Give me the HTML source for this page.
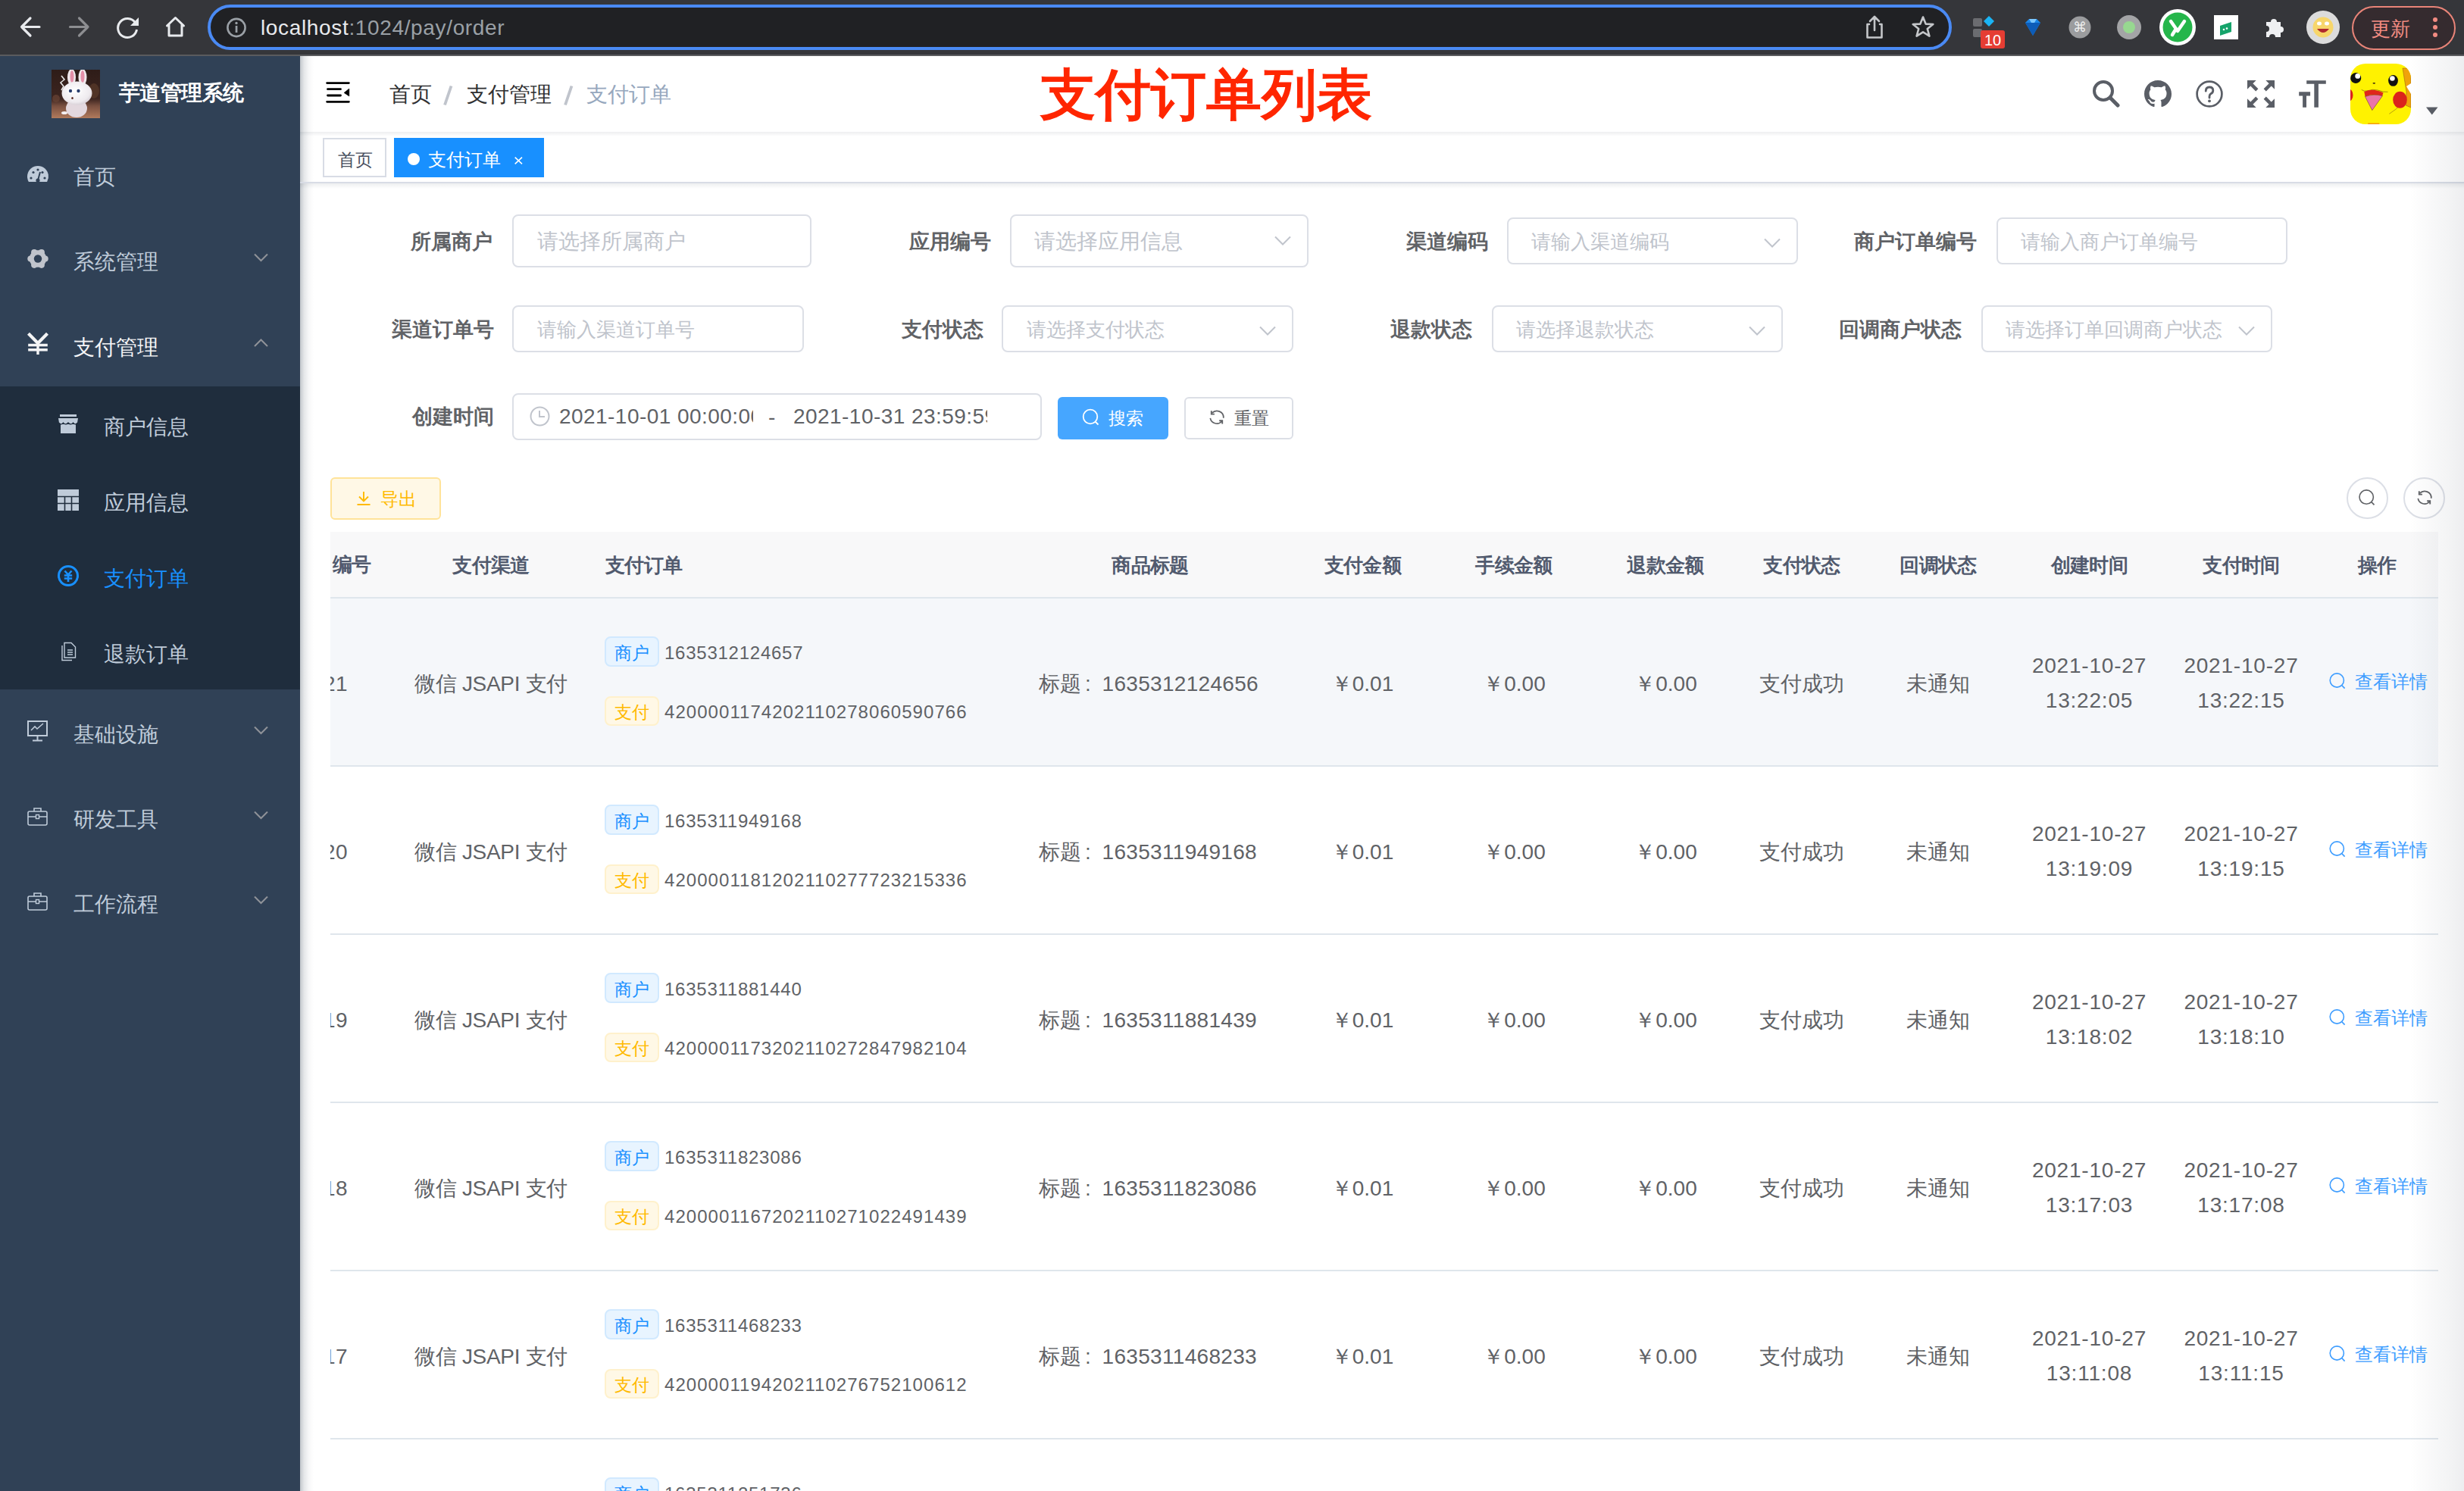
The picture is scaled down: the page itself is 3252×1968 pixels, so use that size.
<!DOCTYPE html>
<html><head><meta charset="utf-8"><title>支付订单</title>
<style>
html,body{margin:0;padding:0;}
body{width:3252px;height:1968px;overflow:hidden;position:relative;background:#fff;font-family:'Liberation Sans', sans-serif;}
.t{position:absolute;white-space:nowrap;height:auto;}
.b{position:absolute;box-sizing:border-box;}
svg.b{overflow:visible;}
</style></head><body>

<div class="b" style="left:0px;top:0px;width:3252px;height:72px;background:#35363a;"></div>
<div class="b" style="left:0px;top:72px;width:3252px;height:2px;background:#5a5b5e;"></div>
<svg class="b" style="left:20px;top:16px;" width="40" height="40" viewBox="0 0 40 40"><path d="M8.5 19.5 H32 M20 8 L8.5 19.5 L20 31" fill="none" stroke="#e8eaed" stroke-width="3.2" stroke-linecap="round" stroke-linejoin="round"/></svg>
<svg class="b" style="left:84px;top:16px;" width="40" height="40" viewBox="0 0 40 40"><path d="M32 19.5 H8.5 M20.5 8 L32 19.5 L20.5 31" fill="none" stroke="#8d8e91" stroke-width="3.2" stroke-linecap="round" stroke-linejoin="round"/></svg>
<svg class="b" style="left:148px;top:16px;" width="40" height="40" viewBox="0 0 40 40"><path d="M30.5 14 A12.5 12.5 0 1 0 32.5 23" fill="none" stroke="#e8eaed" stroke-width="3"/><path d="M35 7 V18 H24 Z" fill="#e8eaed"/></svg>
<svg class="b" style="left:212px;top:16px;" width="40" height="40" viewBox="0 0 40 40"><path d="M8.5 18 L19.5 7.5 L30.5 18 M11 16 V31 H28 V16" fill="none" stroke="#e8eaed" stroke-width="3" stroke-linejoin="round" stroke-linecap="round"/></svg>
<div class="b" style="left:274px;top:6px;width:2302px;height:60px;background:#202124;border:4px solid #4a8af4;border-radius:30px;"></div>
<svg class="b" style="left:296px;top:20px;" width="32" height="32" viewBox="0 0 32 32"><circle cx="16" cy="16.5" r="11.6" fill="none" stroke="#9aa0a6" stroke-width="2.6"/><rect x="14.7" y="14" width="2.7" height="9" fill="#9aa0a6"/><circle cx="16" cy="10.5" r="1.7" fill="#9aa0a6"/></svg>
<div class="t " style="left:344px;top:16.5px;font-size:28px;line-height:40px;color:#606266;font-weight:normal;letter-spacing:0.65px;"><span style="color:#e8eaed">localhost</span><span style="color:#9aa0a6">:1024/pay/order</span></div>
<svg class="b" style="left:2456px;top:18px;" width="36" height="36" viewBox="0 0 36 36"><path d="M11 14 H8.5 V31.5 H27.5 V14 H25 M18 4.5 V22 M12 10 L18 4 L24 10" fill="none" stroke="#c4c6c9" stroke-width="2.6" stroke-linejoin="round" stroke-linecap="round"/></svg>
<svg class="b" style="left:2520px;top:18px;" width="36" height="36" viewBox="0 0 36 36"><path d="M18 4.5 L21.6 13.6 L31.3 14 L23.8 20.1 L26.4 29.6 L18 24.3 L9.6 29.6 L12.2 20.1 L4.7 14 L14.4 13.6 Z" fill="none" stroke="#c4c6c9" stroke-width="2.6" stroke-linejoin="round"/></svg>
<div class="b" style="left:2604px;top:24px;width:12px;height:11px;background:#6b6c70;border-radius:2px;"></div>
<div class="b" style="left:2604px;top:38px;width:12px;height:11px;background:#6b6c70;border-radius:2px;"></div>
<svg class="b" style="left:2617px;top:20px;" width="16" height="16" viewBox="0 0 16 16"><path d="M8 1 L15 8 L8 15 L1 8 Z" fill="#1ab4f4"/></svg>
<div class="b" style="left:2614px;top:40px;width:32px;height:24px;background:#e53d33;border-radius:3px;"></div>
<div class="t " style="left:2619px;top:40.5px;font-size:20px;line-height:24px;color:#fff;font-weight:normal;">10</div>
<svg class="b" style="left:2669px;top:22px;" width="28" height="28" viewBox="0 0 28 28"><path d="M4 8 L9 3 H19 L24 8 L14 25 Z" fill="#1b86e8"/><path d="M4 8 H24 L14 25 Z" fill="#0d5cb8"/><path d="M9 3 H19 L16 8 H12 Z" fill="#7cc8ff"/></svg>
<svg class="b" style="left:2730px;top:21px;" width="30" height="30" viewBox="0 0 30 30"><circle cx="15" cy="15" r="14.5" fill="#9b9c9e"/><text x="15" y="21" font-size="18" text-anchor="middle" fill="#eee" font-family="Liberation Sans">⌘</text></svg>
<svg class="b" style="left:2794px;top:20px;" width="32" height="32" viewBox="0 0 32 32"><circle cx="16" cy="16" r="16" fill="#a3a4a6"/><circle cx="16" cy="16" r="8" fill="#97d890"/></svg>
<svg class="b" style="left:2850px;top:12px;" width="48" height="48" viewBox="0 0 48 48"><circle cx="24" cy="24" r="24" fill="#fff"/><circle cx="24" cy="24" r="19.5" fill="#25b64b"/><path d="M15 16 L22 26 L17 34 M33 16 L24 29" fill="none" stroke="#fff" stroke-width="4.5" stroke-linecap="round"/></svg>
<svg class="b" style="left:2922px;top:20px;" width="32" height="32" viewBox="0 0 32 32"><rect width="32" height="32" fill="#fff"/><path d="M8 14 L23 9 V22 L8 27 Z" fill="#16a46b"/><circle cx="13" cy="19" r="1.3" fill="#fff"/><circle cx="17" cy="17.6" r="1.3" fill="#fff"/></svg>
<svg class="b" style="left:2986px;top:19px;" width="34" height="34" viewBox="0 0 34 34"><path d="M5 10 H11 A4 4 0 0 1 19 10 H24 V16 A4 4 0 0 1 24 24 V30 H17 A4 4 0 0 0 9 30 H5 V23 A4 4 0 0 0 5 15 Z" fill="#eff0f2"/></svg>
<svg class="b" style="left:3044px;top:14px;" width="44" height="44" viewBox="0 0 44 44"><circle cx="22" cy="22" r="22" fill="#dcdcdc"/><circle cx="22" cy="22" r="13.5" fill="#f7d66b"/><ellipse cx="17" cy="17" rx="3" ry="2.5" fill="#fff"/><ellipse cx="27" cy="17" rx="3" ry="2.5" fill="#fff"/><path d="M14 24 Q22 34 30 24 Z" fill="#b0282d"/></svg>
<div class="b" style="left:3104px;top:8px;width:137px;height:58px;background:#352b2f;border:2px solid #e98478;border-radius:29px;"></div>
<div class="t " style="left:3129px;top:19.5px;font-size:26px;line-height:36px;color:#f28b82;font-weight:normal;">更新</div>
<div class="b" style="left:3211px;top:23px;width:6px;height:6px;background:#f28b82;border-radius:50%;"></div>
<div class="b" style="left:3211px;top:33px;width:6px;height:6px;background:#f28b82;border-radius:50%;"></div>
<div class="b" style="left:3211px;top:43px;width:6px;height:6px;background:#f28b82;border-radius:50%;"></div>
<div class="b" style="left:0px;top:74px;width:396px;height:1894px;background:#304156;"></div>
<div class="b" style="left:0px;top:510px;width:396px;height:400px;background:#1f2d3d;"></div>
<svg class="b" style="left:68px;top:92px;overflow:hidden;" width="64" height="64" viewBox="0 0 64 64"><defs><radialGradient id="bh" cx="0.45" cy="0.4" r="0.6"><stop offset="0" stop-color="#ffffff"/><stop offset="0.8" stop-color="#eeeaee"/><stop offset="1" stop-color="#d9d2d8"/></radialGradient>
<linearGradient id="bg1" x1="0" y1="0" x2="0" y2="1"><stop offset="0" stop-color="#2e1c18"/><stop offset="0.6" stop-color="#3d2520"/><stop offset="0.75" stop-color="#7a5040"/><stop offset="1" stop-color="#b07a5c"/></linearGradient></defs>
<rect width="64" height="64" fill="url(#bg1)"/>
<ellipse cx="56" cy="28" rx="7" ry="10" fill="#5a3a2a" opacity="0.7"/><ellipse cx="6" cy="38" rx="5" ry="5" fill="#6a4536" opacity="0.7"/>
<path d="M13 8 L17 13 L12 17 L16 22 L13 27" fill="none" stroke="#e8e8e8" stroke-width="1.6"/>
<ellipse cx="26.5" cy="10" rx="5.5" ry="11" fill="#efe8ec"/><ellipse cx="27" cy="9" rx="2.5" ry="8" fill="#e48fa8"/>
<ellipse cx="41" cy="10" rx="5.5" ry="11" fill="#efe8ec"/><ellipse cx="41" cy="9" rx="2.5" ry="8" fill="#e48fa8"/>
<ellipse cx="33" cy="51" rx="14" ry="12" fill="#e3d8de"/>
<ellipse cx="33.5" cy="31" rx="20" ry="15.5" fill="url(#bh)"/>
<ellipse cx="25" cy="28" rx="3.6" ry="3.2" fill="#fff"/><ellipse cx="35.5" cy="28" rx="3.6" ry="3.2" fill="#fff"/>
<circle cx="25" cy="28" r="2.2" fill="#2a3e6e"/><circle cx="35.5" cy="28" r="2.2" fill="#2a3e6e"/>
<ellipse cx="27.5" cy="37.5" rx="1.3" ry="1.6" fill="#5a2a22"/>
<ellipse cx="17" cy="57" rx="4" ry="2" fill="#f4f0f2"/></svg>
<div class="t " style="left:157px;top:102.5px;font-size:28px;line-height:40px;color:#ffffff;font-weight:bold;letter-spacing:-0.6px;">芋道管理系统</div>
<svg class="b" style="left:36px;top:218px;" width="28" height="24" viewBox="0 0 28 24"><path d="M1.9 22 A14 14 0 1 1 26.1 22 Z" fill="#bfcbd9"/><circle cx="5" cy="17" r="1.6" fill="#304156"/><circle cx="8" cy="9.5" r="1.6" fill="#304156"/><circle cx="14" cy="6" r="1.6" fill="#304156"/><circle cx="20" cy="9.5" r="1.6" fill="#304156"/><circle cx="23" cy="17" r="1.6" fill="#304156"/><path d="M14 20 L17 9" stroke="#304156" stroke-width="2"/><circle cx="14" cy="20" r="2.6" fill="#304156"/></svg>
<div class="t " style="left:97px;top:213.5px;font-size:27.5px;line-height:40px;color:#bfcbd9;font-weight:normal;">首页</div>
<svg class="b" style="left:36px;top:328px;" width="28" height="28" viewBox="0 0 28 28"><circle cx="14" cy="13.5" r="11.2" fill="#c0c4cc"/><circle cx="23.60" cy="13.50" r="4.1" fill="#c0c4cc"/><circle cx="18.80" cy="21.81" r="4.1" fill="#c0c4cc"/><circle cx="9.20" cy="21.81" r="4.1" fill="#c0c4cc"/><circle cx="4.40" cy="13.50" r="4.1" fill="#c0c4cc"/><circle cx="9.20" cy="5.19" r="4.1" fill="#c0c4cc"/><circle cx="18.80" cy="5.19" r="4.1" fill="#c0c4cc"/><circle cx="14" cy="13.5" r="5.2" fill="#304156"/></svg>
<div class="t " style="left:97px;top:326.0px;font-size:27.5px;line-height:40px;color:#bfcbd9;font-weight:normal;">系统管理</div>
<svg class="b" style="left:335px;top:334px;" width="19" height="12" viewBox="0 0 19 12"><path d="M1 1.5 L9.5 10 L18 1.5" fill="none" stroke="#909399" stroke-width="2"/></svg>
<svg class="b" style="left:36px;top:439px;" width="28" height="30" viewBox="0 0 28 30"><path d="M1.5 1.2 L14 14 L26.5 1.2" fill="none" stroke="#f4f4f5" stroke-width="4.2"/><path d="M14 13 V29 M1.2 16.5 H26.8 M1.2 22.8 H26.8" fill="none" stroke="#f4f4f5" stroke-width="3.4"/></svg>
<div class="t " style="left:97px;top:438.5px;font-size:27.5px;line-height:40px;color:#f4f4f5;font-weight:normal;">支付管理</div>
<svg class="b" style="left:335px;top:447px;" width="19" height="12" viewBox="0 0 19 12"><path d="M1 10 L9.5 1.5 L18 10" fill="none" stroke="#909399" stroke-width="2"/></svg>
<svg class="b" style="left:76px;top:547px;" width="28" height="26" viewBox="0 0 28 26"><rect x="3" y="0" width="22" height="3" fill="#bfcbd9"/><path d="M1 5 H27 L26 11 Q23.5 14 21 11 Q18 14 14 11 Q10 14 7 11 Q4.5 14 2 11 Z" fill="#bfcbd9"/><rect x="4" y="13" width="20" height="12" fill="#bfcbd9"/><path d="M2 11 Q4.5 15 7.5 11 Q10.5 15 14 11 Q17.5 15 20.5 11 Q23.5 15 26 11" fill="none" stroke="#1f2d3d" stroke-width="1.2"/></svg>
<div class="t " style="left:137px;top:544.0px;font-size:27.5px;line-height:40px;color:#bfcbd9;font-weight:normal;">商户信息</div>
<svg class="b" style="left:76px;top:646px;" width="28" height="28" viewBox="0 0 28 28"><rect width="28" height="28" fill="#bfcbd9"/><path d="M0 9.5 H28 M0 18.5 H28 M9.5 9 V28 M18.5 9 V28" stroke="#1f2d3d" stroke-width="1.6"/></svg>
<div class="t " style="left:137px;top:644.0px;font-size:27.5px;line-height:40px;color:#bfcbd9;font-weight:normal;">应用信息</div>
<svg class="b" style="left:76px;top:746px;" width="28" height="28" viewBox="0 0 28 28"><circle cx="14" cy="14" r="12.5" fill="none" stroke="#1890ff" stroke-width="3"/><path d="M9.5 7.5 L14 12.5 L18.5 7.5 M8.8 13.5 H19.2 M8.8 17.5 H19.2 M14 12.5 V22" fill="none" stroke="#1890ff" stroke-width="2.6"/></svg>
<div class="t " style="left:137px;top:744.0px;font-size:27.5px;line-height:40px;color:#1890ff;font-weight:normal;">支付订单</div>
<svg class="b" style="left:79px;top:847px;" width="22" height="26" viewBox="0 0 22 26"><path d="M6 1.5 H15 L20.5 7 V21 H6 Z" fill="none" stroke="#bfcbd9" stroke-width="1.4"/><path d="M3 5 V24.5 H16" fill="none" stroke="#bfcbd9" stroke-width="1.4"/><path d="M10 11 H17 M10 14 H17 M10 17 H17" stroke="#bfcbd9" stroke-width="1.4"/></svg>
<div class="t " style="left:137px;top:844.0px;font-size:27.5px;line-height:40px;color:#bfcbd9;font-weight:normal;">退款订单</div>
<svg class="b" style="left:36px;top:951px;" width="27" height="28" viewBox="0 0 27 28"><rect x="1" y="1" width="25" height="19" fill="none" stroke="#bfcbd9" stroke-width="2"/><path d="M5 13 L10 8 L13 11 L21 4" fill="none" stroke="#bfcbd9" stroke-width="1.6"/><path d="M13.5 20 V26 M7 26.5 H20" stroke="#bfcbd9" stroke-width="2"/></svg>
<div class="t " style="left:97px;top:950.0px;font-size:27.5px;line-height:40px;color:#bfcbd9;font-weight:normal;">基础设施</div>
<svg class="b" style="left:335px;top:958px;" width="19" height="12" viewBox="0 0 19 12"><path d="M1 1.5 L9.5 10 L18 1.5" fill="none" stroke="#909399" stroke-width="2"/></svg>
<svg class="b" style="left:36px;top:1065px;" width="27" height="25" viewBox="0 0 27 25"><rect x="1" y="6" width="25" height="18" rx="2" fill="none" stroke="#bfcbd9" stroke-width="1.6"/><path d="M9 6 V2 H18 V6 M1 13 H26" fill="none" stroke="#bfcbd9" stroke-width="1.6"/><rect x="11.5" y="10.5" width="4" height="5" fill="#304156" stroke="#bfcbd9" stroke-width="1.4"/></svg>
<div class="t " style="left:97px;top:1062.0px;font-size:27.5px;line-height:40px;color:#bfcbd9;font-weight:normal;">研发工具</div>
<svg class="b" style="left:335px;top:1070px;" width="19" height="12" viewBox="0 0 19 12"><path d="M1 1.5 L9.5 10 L18 1.5" fill="none" stroke="#909399" stroke-width="2"/></svg>
<svg class="b" style="left:36px;top:1177px;" width="27" height="25" viewBox="0 0 27 25"><rect x="1" y="6" width="25" height="18" rx="2" fill="none" stroke="#bfcbd9" stroke-width="1.6"/><path d="M9 6 V2 H18 V6 M1 13 H26" fill="none" stroke="#bfcbd9" stroke-width="1.6"/><rect x="11.5" y="10.5" width="4" height="5" fill="#304156" stroke="#bfcbd9" stroke-width="1.4"/></svg>
<div class="t " style="left:97px;top:1174.0px;font-size:27.5px;line-height:40px;color:#bfcbd9;font-weight:normal;">工作流程</div>
<svg class="b" style="left:335px;top:1182px;" width="19" height="12" viewBox="0 0 19 12"><path d="M1 1.5 L9.5 10 L18 1.5" fill="none" stroke="#909399" stroke-width="2"/></svg>
<div class="b" style="left:396px;top:74px;width:18px;height:1894px;background:linear-gradient(to right, rgba(0,21,41,0.24), rgba(0,21,41,0.10) 30%, rgba(0,21,41,0.03) 65%, rgba(0,21,41,0));"></div>
<div class="b" style="left:396px;top:174px;width:2856px;height:6px;background:linear-gradient(to bottom, rgba(0,21,41,0.07), rgba(0,21,41,0));"></div>
<svg class="b" style="left:430px;top:107px;" width="34" height="30" viewBox="0 0 34 30"><path d="M1.6 2.6 H30.4 M2.5 10.7 H19.5 M2.5 19 H19.5 M1.6 27.3 H30.4" stroke="#000" stroke-width="2.8" stroke-linecap="round"/><path d="M24.1 15.4 L30.8 10.1 V19.9 Z" fill="#000" stroke="#000" stroke-width="0.6" stroke-linejoin="round"/></svg>
<div class="t " style="left:514px;top:104.5px;font-size:28px;line-height:40px;color:#303133;font-weight:normal;">首页</div>
<svg class="b" style="left:584px;top:112px;" width="14" height="28" viewBox="0 0 14 28"><path d="M11.5 1.5 L3 26.5" stroke="#c0c4cc" stroke-width="3.8" stroke-linecap="butt"/></svg>
<div class="t " style="left:616px;top:104.5px;font-size:28px;line-height:40px;color:#303133;font-weight:normal;">支付管理</div>
<svg class="b" style="left:743px;top:112px;" width="14" height="28" viewBox="0 0 14 28"><path d="M11.5 1.5 L3 26.5" stroke="#c0c4cc" stroke-width="3.8" stroke-linecap="butt"/></svg>
<div class="t " style="left:774px;top:104.5px;font-size:28px;line-height:40px;color:#97a8be;font-weight:normal;">支付订单</div>
<div class="t " style="left:1372.5px;top:75.0px;font-size:72.5px;line-height:100px;color:#ff2600;font-weight:bold;letter-spacing:0px;">支付订单列表</div>
<svg class="b" style="left:2760px;top:104px;" width="40" height="40" viewBox="0 0 40 40"><circle cx="16" cy="16" r="12" fill="none" stroke="#5a5e66" stroke-width="4"/><path d="M25 25 L35 35" stroke="#5a5e66" stroke-width="5" stroke-linecap="round"/></svg>
<svg class="b" style="left:2830px;top:106px;" width="36" height="36" viewBox="0 0 36 36"><path fill="#5a5e66" transform="scale(2.25)" d="M8 0C3.58 0 0 3.58 0 8c0 3.54 2.29 6.53 5.47 7.59.4.07.55-.17.55-.38 0-.19-.01-.82-.01-1.49-2.01.37-2.53-.49-2.69-.94-.09-.23-.48-.94-.82-1.13-.28-.15-.68-.52-.01-.53.63-.01 1.08.58 1.23.82.72 1.21 1.87.87 2.33.66.07-.52.28-.87.51-1.07-1.78-.2-3.64-.89-3.64-3.95 0-.87.31-1.59.82-2.150-.08-.2-.36-1.02.08-2.12 0 0 .67-.21 2.2.82.64-.18 1.32-.27 2-.27.68 0 1.36.09 2 .27 1.53-1.04 2.2-.82 2.2-.82.44 1.1.16 1.92.08 2.12.51.56.82 1.27.82 2.15 0 3.07-1.87 3.75-3.65 3.95.29.25.54.73.54 1.48 0 1.07-.01 1.93-.01 2.2 0 .21.15.46.55.38A8.013 8.013 0 0016 8c0-4.42-3.58-8-8-8z"/></svg>
<svg class="b" style="left:2898px;top:106px;" width="36" height="36" viewBox="0 0 36 36"><circle cx="18" cy="18" r="16.4" fill="none" stroke="#5a5e66" stroke-width="2.7"/><path d="M13.2 14.2 Q13.2 9 18 9 Q22.8 9 22.8 13.5 Q22.8 16.5 19.5 18 Q18 19 18 21.5 V23" fill="none" stroke="#5a5e66" stroke-width="2.8" stroke-linecap="round"/><circle cx="18" cy="27.3" r="1.9" fill="#5a5e66"/></svg>
<svg class="b" style="left:2966px;top:106px;" width="36" height="36" viewBox="0 0 36 36"><g fill="#5a5e66"><path d="M0 0 H11.7 L7.4 4.3 L14.4 11.2 L11.2 14.4 L4.3 7.4 L0 11.7 Z"/><path transform="translate(36 0) scale(-1 1)" d="M0 0 H11.7 L7.4 4.3 L14.4 11.2 L11.2 14.4 L4.3 7.4 L0 11.7 Z"/><path transform="translate(0 36) scale(1 -1)" d="M0 0 H11.7 L7.4 4.3 L14.4 11.2 L11.2 14.4 L4.3 7.4 L0 11.7 Z"/><path transform="translate(36 36) scale(-1 -1)" d="M0 0 H11.7 L7.4 4.3 L14.4 11.2 L11.2 14.4 L4.3 7.4 L0 11.7 Z"/></g></svg>
<svg class="b" style="left:3034px;top:106px;" width="36" height="36" viewBox="0 0 36 36"><path d="M10.2 0.2 H35.8 V4.7 H25.9 V35.8 H20.3 V4.7 H10.2 Z" fill="#5a5e66"/><path d="M0.2 15.2 H15.1 V20.4 H10 V35.8 H5.1 V20.4 H0.2 Z" fill="#5a5e66"/></svg>
<svg class="b" style="left:3102px;top:84px;" width="80" height="80" viewBox="0 0 80 80"><defs><clipPath id="av"><rect width="80" height="80" rx="20"/></clipPath></defs>
<g clip-path="url(#av)"><rect width="80" height="80" fill="#fff200"/>
<path d="M69 6 L80 6 L80 58 L73 55 L74 37 Z" fill="#f0a30a" stroke="#8a5a10" stroke-width="0.5"/><path d="M74 30 L80 26 L80 40 Z" fill="#fff"/>
<ellipse cx="7.2" cy="19" rx="7" ry="7" fill="#111" transform="rotate(-20 7.2 19)"/><circle cx="9.7" cy="16.4" r="3.4" fill="#fff"/>
<ellipse cx="56.5" cy="22.4" rx="6.4" ry="7.4" fill="#111"/><circle cx="55.4" cy="19.5" r="3.3" fill="#fff"/>
<ellipse cx="31.3" cy="25.8" rx="1.8" ry="0.9" fill="#3a2a10"/>
<path d="M51.3 66.3 Q60 61 67.7 53.3" fill="none" stroke="#8a6a10" stroke-width="0.6"/><ellipse cx="65.5" cy="47.7" rx="9.3" ry="11" fill="#db241c"/><ellipse cx="-2" cy="41.5" rx="5.5" ry="8" fill="#db241c"/>
<path d="M14.7 34.4 Q18 37 22 36 Q30 33 36 35 Q44 38 49.5 37.3" fill="none" stroke="#6a4a10" stroke-width="0.6"/>
<path d="M18.3 37 Q30 32 43.5 38.5 L42 43 Q31 39 19.5 43.5 Z" fill="#e0261b"/>
<path d="M19.5 43.5 Q31 39.5 42.4 42.5 L28.8 61.6 Z" fill="#ea74a8" stroke="#5a2a20" stroke-width="0.5"/>
<rect x="23.2" y="78.5" width="15" height="2.5" fill="#f59a0b"/></g></svg>
<svg class="b" style="left:3202px;top:141px;" width="16" height="11" viewBox="0 0 16 11"><path d="M0 0.5 H15.5 L7.75 10.5 Z" fill="#5a5e66"/></svg>
<div class="b" style="left:396px;top:240px;width:2856px;height:2px;background:#d8dce5;"></div><div class="b" style="left:396px;top:242px;width:2856px;height:7px;background:linear-gradient(to bottom, rgba(0,21,41,0.07), rgba(0,21,41,0));"></div>
<div class="b" style="left:426px;top:182px;width:84px;height:52px;border:2px solid #d8dce5;background:#fff;"></div>
<div class="t " style="left:446px;top:192.5px;font-size:23px;line-height:36px;color:#495060;font-weight:normal;">首页</div>
<div class="b" style="left:520px;top:182px;width:198px;height:52px;background:#1890ff;"></div>
<div class="b" style="left:538px;top:202px;width:16px;height:16px;background:#fff;border-radius:50%;"></div>
<div class="t " style="left:565px;top:192.5px;font-size:23.5px;line-height:36px;color:#fff;font-weight:normal;">支付订单</div>
<svg class="b" style="left:679px;top:207px;" width="11" height="10" viewBox="0 0 11 10"><path d="M0.7 0.7 L10 9.3 M10 0.7 L0.7 9.3" stroke="#fff" stroke-width="1.6"/></svg>
<div class="t" style="left:249px;width:401px;text-align:right;top:298.5px;font-size:27px;line-height:40px;color:#606266;font-weight:bold;">所属商户</div>
<div class="b" style="left:676px;top:283px;width:395px;height:70px;border:2px solid #dcdfe6;border-radius:8px;background:#fff;"></div>
<div class="t " style="left:709px;top:299.0px;font-size:27.5px;line-height:40px;color:#c0c4cc;font-weight:normal;">请选择所属商户</div>
<div class="t" style="left:907px;width:401px;text-align:right;top:298.5px;font-size:27px;line-height:40px;color:#606266;font-weight:bold;">应用编号</div>
<div class="b" style="left:1333px;top:283px;width:394px;height:70px;border:2px solid #dcdfe6;border-radius:8px;background:#fff;"></div>
<div class="t " style="left:1365px;top:299.0px;font-size:27.5px;line-height:40px;color:#c0c4cc;font-weight:normal;">请选择应用信息</div>
<svg class="b" style="left:1682px;top:311px;" width="22" height="13" viewBox="0 0 22 13"><path d="M1 1.5 L11 11.5 L21 1.5" fill="none" stroke="#c0c4cc" stroke-width="2"/></svg>
<div class="t" style="left:1563px;width:401px;text-align:right;top:298.5px;font-size:27px;line-height:40px;color:#606266;font-weight:bold;">渠道编码</div>
<div class="b" style="left:1989px;top:287px;width:384px;height:62px;border:2px solid #dcdfe6;border-radius:8px;background:#fff;"></div>
<div class="t " style="left:2021px;top:299.0px;font-size:26px;line-height:40px;color:#c0c4cc;font-weight:normal;">请输入渠道编码</div>
<svg class="b" style="left:2328px;top:314px;" width="22" height="13" viewBox="0 0 22 13"><path d="M1 1.5 L11 11.5 L21 1.5" fill="none" stroke="#c0c4cc" stroke-width="2"/></svg>
<div class="t" style="left:2208px;width:401px;text-align:right;top:298.5px;font-size:27px;line-height:40px;color:#606266;font-weight:bold;">商户订单编号</div>
<div class="b" style="left:2635px;top:287px;width:384px;height:62px;border:2px solid #dcdfe6;border-radius:8px;background:#fff;"></div>
<div class="t " style="left:2667px;top:299.0px;font-size:26px;line-height:40px;color:#c0c4cc;font-weight:normal;">请输入商户订单编号</div>
<div class="t" style="left:250.60000000000002px;width:401px;text-align:right;top:415.0px;font-size:27px;line-height:40px;color:#606266;font-weight:bold;">渠道订单号</div>
<div class="b" style="left:676px;top:403px;width:385px;height:62px;border:2px solid #dcdfe6;border-radius:8px;background:#fff;"></div>
<div class="t " style="left:709px;top:415.0px;font-size:26px;line-height:40px;color:#c0c4cc;font-weight:normal;">请输入渠道订单号</div>
<div class="t" style="left:897px;width:401px;text-align:right;top:415.0px;font-size:27px;line-height:40px;color:#606266;font-weight:bold;">支付状态</div>
<div class="b" style="left:1322px;top:403px;width:385px;height:62px;border:2px solid #dcdfe6;border-radius:8px;background:#fff;"></div>
<div class="t " style="left:1355px;top:415.0px;font-size:26px;line-height:40px;color:#c0c4cc;font-weight:normal;">请选择支付状态</div>
<svg class="b" style="left:1662px;top:430px;" width="22" height="13" viewBox="0 0 22 13"><path d="M1 1.5 L11 11.5 L21 1.5" fill="none" stroke="#c0c4cc" stroke-width="2"/></svg>
<div class="t" style="left:1542px;width:401px;text-align:right;top:415.0px;font-size:27px;line-height:40px;color:#606266;font-weight:bold;">退款状态</div>
<div class="b" style="left:1969px;top:403px;width:384px;height:62px;border:2px solid #dcdfe6;border-radius:8px;background:#fff;"></div>
<div class="t " style="left:2001px;top:415.0px;font-size:26px;line-height:40px;color:#c0c4cc;font-weight:normal;">请选择退款状态</div>
<svg class="b" style="left:2308px;top:430px;" width="22" height="13" viewBox="0 0 22 13"><path d="M1 1.5 L11 11.5 L21 1.5" fill="none" stroke="#c0c4cc" stroke-width="2"/></svg>
<div class="t" style="left:2188px;width:401px;text-align:right;top:415.0px;font-size:27px;line-height:40px;color:#606266;font-weight:bold;">回调商户状态</div>
<div class="b" style="left:2615px;top:403px;width:384px;height:62px;border:2px solid #dcdfe6;border-radius:8px;background:#fff;"></div>
<div class="t " style="left:2647px;top:415.0px;font-size:26px;line-height:40px;color:#c0c4cc;font-weight:normal;">请选择订单回调商户状态</div>
<svg class="b" style="left:2954px;top:430px;" width="22" height="13" viewBox="0 0 22 13"><path d="M1 1.5 L11 11.5 L21 1.5" fill="none" stroke="#c0c4cc" stroke-width="2"/></svg>
<div class="t" style="left:251px;width:401px;text-align:right;top:530.0px;font-size:27px;line-height:40px;color:#606266;font-weight:bold;">创建时间</div>
<div class="b" style="left:676px;top:519px;width:699px;height:62px;border:2px solid #dcdfe6;border-radius:8px;background:#fff;"></div>
<svg class="b" style="left:699px;top:536px;" width="27" height="27" viewBox="0 0 27 27"><circle cx="13.5" cy="13.5" r="12" fill="none" stroke="#c0c4cc" stroke-width="2"/><path d="M13 6 V14 H20" fill="none" stroke="#c0c4cc" stroke-width="2"/></svg>
<div class="b" style="left:738px;top:530px;width:256px;height:40px;overflow:hidden;"><div class="t" style="left:0;top:0;font-size:28px;line-height:40px;color:#606266;letter-spacing:0.45px;">2021-10-01 00:00:00</div></div>
<div class="t " style="left:1014px;top:530.5px;font-size:28px;line-height:40px;color:#606266;font-weight:normal;">-</div>
<div class="b" style="left:1047px;top:530px;width:256px;height:40px;overflow:hidden;"><div class="t" style="left:0;top:0;font-size:28px;line-height:40px;color:#606266;letter-spacing:0.45px;">2021-10-31 23:59:59</div></div>
<div class="b" style="left:1396px;top:524px;width:146px;height:56px;background:#46a6ff;border-radius:6px;"></div>
<svg class="b" style="left:1428px;top:539px;" width="24" height="24" viewBox="0 0 24 24"><circle cx="11" cy="11" r="9.3" fill="none" stroke="#fff" stroke-width="1.8"/><path d="M17.5 17.5 L21.5 21.5" stroke="#fff" stroke-width="1.8"/></svg>
<div class="t " style="left:1462.5px;top:533.5px;font-size:23px;line-height:36px;color:#fff;font-weight:normal;">搜索</div>
<div class="b" style="left:1563px;top:524px;width:144px;height:56px;background:#fff;border:2px solid #dcdfe6;border-radius:6px;"></div>
<svg class="b" style="left:1595px;top:541px;" width="24" height="22" viewBox="0 0 24 22"><path d="M4.6 4.2 A8.8 8.8 0 0 1 19.8 10.8 M2.3 10.8 A8.8 8.8 0 0 0 17.6 15" fill="none" stroke="#606266" stroke-width="1.7"/><path d="M3.8 1.2 V5.6 H7.9" fill="none" stroke="#606266" stroke-width="1.9"/><path d="M14.2 14.3 H18.2 V18.5" fill="none" stroke="#606266" stroke-width="1.9"/></svg>
<div class="t " style="left:1629px;top:533.5px;font-size:23px;line-height:36px;color:#606266;font-weight:normal;">重置</div>
<div class="b" style="left:436px;top:630px;width:146px;height:56px;background:#fff8e6;border:2px solid #ffe399;border-radius:6px;"></div>
<svg class="b" style="left:470px;top:648px;" width="20" height="19" viewBox="0 0 20 19"><path d="M10 1 V13 M4 7.5 L10 13.5 L16 7.5 M1.5 18 H18.5" fill="none" stroke="#ffba00" stroke-width="1.9"/></svg>
<div class="t " style="left:502px;top:640.5px;font-size:24px;line-height:36px;color:#ffba00;font-weight:normal;">导出</div>
<div class="b" style="left:3097px;top:630px;width:55px;height:55px;border:2px solid #dcdfe6;border-radius:50%;background:#fff;"></div>
<svg class="b" style="left:3112px;top:645px;" width="24" height="24" viewBox="0 0 24 24"><circle cx="11.2" cy="11.1" r="9.2" fill="none" stroke="#606266" stroke-width="1.6"/><path d="M17.8 17.7 L21.5 21.4" stroke="#606266" stroke-width="1.7"/></svg>
<div class="b" style="left:3172px;top:630px;width:55px;height:55px;border:2px solid #dcdfe6;border-radius:50%;background:#fff;"></div>
<svg class="b" style="left:3189px;top:647px;" width="24" height="22" viewBox="0 0 24 22"><path d="M4.6 4.2 A8.8 8.8 0 0 1 19.8 10.8 M2.3 10.8 A8.8 8.8 0 0 0 17.6 15" fill="none" stroke="#606266" stroke-width="1.7"/><path d="M3.8 1.2 V5.6 H7.9" fill="none" stroke="#606266" stroke-width="1.9"/><path d="M14.2 14.3 H18.2 V18.5" fill="none" stroke="#606266" stroke-width="1.9"/></svg>
<div class="b" style="left:436px;top:702px;width:2782px;height:87px;background:#f8f8f9;"></div>
<div class="b" style="left:436px;top:788px;width:2782px;height:2px;background:#dfe6ec;"></div>
<div class="b" style="left:436px;top:720px;width:80px;height:50px;overflow:hidden;"><div class="t" style="left:2.5px;top:5px;font-size:26px;line-height:40px;color:#515a6e;font-weight:bold;letter-spacing:-0.6px;">编号</div></div>
<div class="t" style="left:448.0px;width:400px;text-align:center;top:726.0px;font-size:26px;line-height:40px;color:#515a6e;font-weight:bold;letter-spacing:-0.6px;">支付渠道</div>
<div class="t " style="left:799px;top:726.0px;font-size:26px;line-height:40px;color:#515a6e;font-weight:bold;letter-spacing:-0.6px;">支付订单</div>
<div class="t" style="left:1318.0px;width:400px;text-align:center;top:726.0px;font-size:26px;line-height:40px;color:#515a6e;font-weight:bold;letter-spacing:-0.6px;">商品标题</div>
<div class="t" style="left:1598.5px;width:400px;text-align:center;top:726.0px;font-size:26px;line-height:40px;color:#515a6e;font-weight:bold;letter-spacing:-0.6px;">支付金额</div>
<div class="t" style="left:1798.0px;width:400px;text-align:center;top:726.0px;font-size:26px;line-height:40px;color:#515a6e;font-weight:bold;letter-spacing:-0.6px;">手续金额</div>
<div class="t" style="left:1998.0px;width:400px;text-align:center;top:726.0px;font-size:26px;line-height:40px;color:#515a6e;font-weight:bold;letter-spacing:-0.6px;">退款金额</div>
<div class="t" style="left:2178.0px;width:400px;text-align:center;top:726.0px;font-size:26px;line-height:40px;color:#515a6e;font-weight:bold;letter-spacing:-0.6px;">支付状态</div>
<div class="t" style="left:2358.0px;width:400px;text-align:center;top:726.0px;font-size:26px;line-height:40px;color:#515a6e;font-weight:bold;letter-spacing:-0.6px;">回调状态</div>
<div class="t" style="left:2557.5px;width:400px;text-align:center;top:726.0px;font-size:26px;line-height:40px;color:#515a6e;font-weight:bold;letter-spacing:-0.6px;">创建时间</div>
<div class="t" style="left:2758.0px;width:400px;text-align:center;top:726.0px;font-size:26px;line-height:40px;color:#515a6e;font-weight:bold;letter-spacing:-0.6px;">支付时间</div>
<div class="t" style="left:2937.5px;width:400px;text-align:center;top:726.0px;font-size:26px;line-height:40px;color:#515a6e;font-weight:bold;letter-spacing:-0.6px;">操作</div>
<div class="b" style="left:436px;top:790px;width:2782px;height:220px;background:#f5f7fa;"></div>
<div class="b" style="left:436px;top:1010px;width:2782px;height:2px;background:#dfe6ec;"></div>
<div class="b" style="left:436px;top:870px;width:60px;height:50px;overflow:hidden;"><div class="t" style="left:-9px;top:12.5px;font-size:28px;line-height:40px;color:#606266;letter-spacing:0.5px;">21</div></div>
<div class="t " style="left:547px;top:882.5px;font-size:28px;line-height:40px;color:#606266;font-weight:normal;letter-spacing:-0.3px;">微信 JSAPI 支付</div>
<div class="b" style="left:798px;top:840px;width:72px;height:40px;background:#e8f4ff;border:2px solid #d1e9ff;border-radius:8px;"></div>
<div class="t " style="left:811px;top:844.5px;font-size:22.5px;line-height:36px;color:#1890ff;font-weight:normal;">商户</div>
<div class="t " style="left:877px;top:844.0px;font-size:24px;line-height:36px;color:#606266;font-weight:normal;letter-spacing:0.75px;">1635312124657</div>
<div class="b" style="left:798px;top:919px;width:72px;height:39px;background:#fff8e6;border:2px solid #fff1cc;border-radius:8px;"></div>
<div class="t " style="left:811px;top:922.5px;font-size:22.5px;line-height:36px;color:#ffba00;font-weight:normal;">支付</div>
<div class="t " style="left:877px;top:922.0px;font-size:24px;line-height:36px;color:#606266;font-weight:normal;letter-spacing:1.05px;">4200001174202110278060590766</div>
<div class="t " style="left:1371px;top:882.5px;font-size:28px;line-height:40px;color:#606266;font-weight:normal;letter-spacing:0.3px;">标题<span style="display:inline-block;width:27px;padding-left:4.5px;box-sizing:border-box;letter-spacing:0">:</span>1635312124656</div>
<div class="t" style="left:1598.0px;width:400px;text-align:center;top:882.5px;font-size:28px;line-height:40px;color:#606266;font-weight:normal;">￥0.01</div>
<div class="t" style="left:1798.5px;width:400px;text-align:center;top:882.5px;font-size:28px;line-height:40px;color:#606266;font-weight:normal;">￥0.00</div>
<div class="t" style="left:1998.5px;width:400px;text-align:center;top:882.5px;font-size:28px;line-height:40px;color:#606266;font-weight:normal;">￥0.00</div>
<div class="t" style="left:2178.0px;width:400px;text-align:center;top:883.0px;font-size:28px;line-height:40px;color:#606266;font-weight:normal;">支付成功</div>
<div class="t" style="left:2357.5px;width:400px;text-align:center;top:883.0px;font-size:28px;line-height:40px;color:#606266;font-weight:normal;">未通知</div>
<div class="t" style="left:2557.5px;width:400px;text-align:center;top:858.5px;font-size:28px;line-height:40px;color:#606266;font-weight:normal;letter-spacing:0.8px;">2021-10-27</div>
<div class="t" style="left:2557.5px;width:400px;text-align:center;top:904.5px;font-size:28px;line-height:40px;color:#606266;font-weight:normal;letter-spacing:0.8px;">13:22:05</div>
<div class="t" style="left:2758.0px;width:400px;text-align:center;top:858.5px;font-size:28px;line-height:40px;color:#606266;font-weight:normal;letter-spacing:0.8px;">2021-10-27</div>
<div class="t" style="left:2758.0px;width:400px;text-align:center;top:904.5px;font-size:28px;line-height:40px;color:#606266;font-weight:normal;letter-spacing:0.8px;">13:22:15</div>
<svg class="b" style="left:3073px;top:887px;" width="24" height="24" viewBox="0 0 24 24"><circle cx="11.3" cy="11" r="9.1" fill="none" stroke="#409eff" stroke-width="1.6"/><path d="M17.8 17.6 L21.6 21.6" stroke="#409eff" stroke-width="1.6"/></svg>
<div class="t " style="left:3107.5px;top:881.5px;font-size:23.5px;line-height:36px;color:#409eff;font-weight:normal;">查看详情</div>
<div class="b" style="left:436px;top:1232px;width:2782px;height:2px;background:#dfe6ec;"></div>
<div class="b" style="left:436px;top:1092px;width:60px;height:50px;overflow:hidden;"><div class="t" style="left:-9px;top:12.5px;font-size:28px;line-height:40px;color:#606266;letter-spacing:0.5px;">20</div></div>
<div class="t " style="left:547px;top:1104.5px;font-size:28px;line-height:40px;color:#606266;font-weight:normal;letter-spacing:-0.3px;">微信 JSAPI 支付</div>
<div class="b" style="left:798px;top:1062px;width:72px;height:40px;background:#e8f4ff;border:2px solid #d1e9ff;border-radius:8px;"></div>
<div class="t " style="left:811px;top:1066.5px;font-size:22.5px;line-height:36px;color:#1890ff;font-weight:normal;">商户</div>
<div class="t " style="left:877px;top:1066.0px;font-size:24px;line-height:36px;color:#606266;font-weight:normal;letter-spacing:0.75px;">1635311949168</div>
<div class="b" style="left:798px;top:1141px;width:72px;height:39px;background:#fff8e6;border:2px solid #fff1cc;border-radius:8px;"></div>
<div class="t " style="left:811px;top:1144.5px;font-size:22.5px;line-height:36px;color:#ffba00;font-weight:normal;">支付</div>
<div class="t " style="left:877px;top:1144.0px;font-size:24px;line-height:36px;color:#606266;font-weight:normal;letter-spacing:1.05px;">4200001181202110277723215336</div>
<div class="t " style="left:1371px;top:1104.5px;font-size:28px;line-height:40px;color:#606266;font-weight:normal;letter-spacing:0.3px;">标题<span style="display:inline-block;width:27px;padding-left:4.5px;box-sizing:border-box;letter-spacing:0">:</span>1635311949168</div>
<div class="t" style="left:1598.0px;width:400px;text-align:center;top:1104.5px;font-size:28px;line-height:40px;color:#606266;font-weight:normal;">￥0.01</div>
<div class="t" style="left:1798.5px;width:400px;text-align:center;top:1104.5px;font-size:28px;line-height:40px;color:#606266;font-weight:normal;">￥0.00</div>
<div class="t" style="left:1998.5px;width:400px;text-align:center;top:1104.5px;font-size:28px;line-height:40px;color:#606266;font-weight:normal;">￥0.00</div>
<div class="t" style="left:2178.0px;width:400px;text-align:center;top:1105.0px;font-size:28px;line-height:40px;color:#606266;font-weight:normal;">支付成功</div>
<div class="t" style="left:2357.5px;width:400px;text-align:center;top:1105.0px;font-size:28px;line-height:40px;color:#606266;font-weight:normal;">未通知</div>
<div class="t" style="left:2557.5px;width:400px;text-align:center;top:1080.5px;font-size:28px;line-height:40px;color:#606266;font-weight:normal;letter-spacing:0.8px;">2021-10-27</div>
<div class="t" style="left:2557.5px;width:400px;text-align:center;top:1126.5px;font-size:28px;line-height:40px;color:#606266;font-weight:normal;letter-spacing:0.8px;">13:19:09</div>
<div class="t" style="left:2758.0px;width:400px;text-align:center;top:1080.5px;font-size:28px;line-height:40px;color:#606266;font-weight:normal;letter-spacing:0.8px;">2021-10-27</div>
<div class="t" style="left:2758.0px;width:400px;text-align:center;top:1126.5px;font-size:28px;line-height:40px;color:#606266;font-weight:normal;letter-spacing:0.8px;">13:19:15</div>
<svg class="b" style="left:3073px;top:1109px;" width="24" height="24" viewBox="0 0 24 24"><circle cx="11.3" cy="11" r="9.1" fill="none" stroke="#409eff" stroke-width="1.6"/><path d="M17.8 17.6 L21.6 21.6" stroke="#409eff" stroke-width="1.6"/></svg>
<div class="t " style="left:3107.5px;top:1103.5px;font-size:23.5px;line-height:36px;color:#409eff;font-weight:normal;">查看详情</div>
<div class="b" style="left:436px;top:1454px;width:2782px;height:2px;background:#dfe6ec;"></div>
<div class="b" style="left:436px;top:1314px;width:60px;height:50px;overflow:hidden;"><div class="t" style="left:-9px;top:12.5px;font-size:28px;line-height:40px;color:#606266;letter-spacing:0.5px;">19</div></div>
<div class="t " style="left:547px;top:1326.5px;font-size:28px;line-height:40px;color:#606266;font-weight:normal;letter-spacing:-0.3px;">微信 JSAPI 支付</div>
<div class="b" style="left:798px;top:1284px;width:72px;height:40px;background:#e8f4ff;border:2px solid #d1e9ff;border-radius:8px;"></div>
<div class="t " style="left:811px;top:1288.5px;font-size:22.5px;line-height:36px;color:#1890ff;font-weight:normal;">商户</div>
<div class="t " style="left:877px;top:1288.0px;font-size:24px;line-height:36px;color:#606266;font-weight:normal;letter-spacing:0.75px;">1635311881440</div>
<div class="b" style="left:798px;top:1363px;width:72px;height:39px;background:#fff8e6;border:2px solid #fff1cc;border-radius:8px;"></div>
<div class="t " style="left:811px;top:1366.5px;font-size:22.5px;line-height:36px;color:#ffba00;font-weight:normal;">支付</div>
<div class="t " style="left:877px;top:1366.0px;font-size:24px;line-height:36px;color:#606266;font-weight:normal;letter-spacing:1.05px;">4200001173202110272847982104</div>
<div class="t " style="left:1371px;top:1326.5px;font-size:28px;line-height:40px;color:#606266;font-weight:normal;letter-spacing:0.3px;">标题<span style="display:inline-block;width:27px;padding-left:4.5px;box-sizing:border-box;letter-spacing:0">:</span>1635311881439</div>
<div class="t" style="left:1598.0px;width:400px;text-align:center;top:1326.5px;font-size:28px;line-height:40px;color:#606266;font-weight:normal;">￥0.01</div>
<div class="t" style="left:1798.5px;width:400px;text-align:center;top:1326.5px;font-size:28px;line-height:40px;color:#606266;font-weight:normal;">￥0.00</div>
<div class="t" style="left:1998.5px;width:400px;text-align:center;top:1326.5px;font-size:28px;line-height:40px;color:#606266;font-weight:normal;">￥0.00</div>
<div class="t" style="left:2178.0px;width:400px;text-align:center;top:1327.0px;font-size:28px;line-height:40px;color:#606266;font-weight:normal;">支付成功</div>
<div class="t" style="left:2357.5px;width:400px;text-align:center;top:1327.0px;font-size:28px;line-height:40px;color:#606266;font-weight:normal;">未通知</div>
<div class="t" style="left:2557.5px;width:400px;text-align:center;top:1302.5px;font-size:28px;line-height:40px;color:#606266;font-weight:normal;letter-spacing:0.8px;">2021-10-27</div>
<div class="t" style="left:2557.5px;width:400px;text-align:center;top:1348.5px;font-size:28px;line-height:40px;color:#606266;font-weight:normal;letter-spacing:0.8px;">13:18:02</div>
<div class="t" style="left:2758.0px;width:400px;text-align:center;top:1302.5px;font-size:28px;line-height:40px;color:#606266;font-weight:normal;letter-spacing:0.8px;">2021-10-27</div>
<div class="t" style="left:2758.0px;width:400px;text-align:center;top:1348.5px;font-size:28px;line-height:40px;color:#606266;font-weight:normal;letter-spacing:0.8px;">13:18:10</div>
<svg class="b" style="left:3073px;top:1331px;" width="24" height="24" viewBox="0 0 24 24"><circle cx="11.3" cy="11" r="9.1" fill="none" stroke="#409eff" stroke-width="1.6"/><path d="M17.8 17.6 L21.6 21.6" stroke="#409eff" stroke-width="1.6"/></svg>
<div class="t " style="left:3107.5px;top:1325.5px;font-size:23.5px;line-height:36px;color:#409eff;font-weight:normal;">查看详情</div>
<div class="b" style="left:436px;top:1676px;width:2782px;height:2px;background:#dfe6ec;"></div>
<div class="b" style="left:436px;top:1536px;width:60px;height:50px;overflow:hidden;"><div class="t" style="left:-9px;top:12.5px;font-size:28px;line-height:40px;color:#606266;letter-spacing:0.5px;">18</div></div>
<div class="t " style="left:547px;top:1548.5px;font-size:28px;line-height:40px;color:#606266;font-weight:normal;letter-spacing:-0.3px;">微信 JSAPI 支付</div>
<div class="b" style="left:798px;top:1506px;width:72px;height:40px;background:#e8f4ff;border:2px solid #d1e9ff;border-radius:8px;"></div>
<div class="t " style="left:811px;top:1510.5px;font-size:22.5px;line-height:36px;color:#1890ff;font-weight:normal;">商户</div>
<div class="t " style="left:877px;top:1510.0px;font-size:24px;line-height:36px;color:#606266;font-weight:normal;letter-spacing:0.75px;">1635311823086</div>
<div class="b" style="left:798px;top:1585px;width:72px;height:39px;background:#fff8e6;border:2px solid #fff1cc;border-radius:8px;"></div>
<div class="t " style="left:811px;top:1588.5px;font-size:22.5px;line-height:36px;color:#ffba00;font-weight:normal;">支付</div>
<div class="t " style="left:877px;top:1588.0px;font-size:24px;line-height:36px;color:#606266;font-weight:normal;letter-spacing:1.05px;">4200001167202110271022491439</div>
<div class="t " style="left:1371px;top:1548.5px;font-size:28px;line-height:40px;color:#606266;font-weight:normal;letter-spacing:0.3px;">标题<span style="display:inline-block;width:27px;padding-left:4.5px;box-sizing:border-box;letter-spacing:0">:</span>1635311823086</div>
<div class="t" style="left:1598.0px;width:400px;text-align:center;top:1548.5px;font-size:28px;line-height:40px;color:#606266;font-weight:normal;">￥0.01</div>
<div class="t" style="left:1798.5px;width:400px;text-align:center;top:1548.5px;font-size:28px;line-height:40px;color:#606266;font-weight:normal;">￥0.00</div>
<div class="t" style="left:1998.5px;width:400px;text-align:center;top:1548.5px;font-size:28px;line-height:40px;color:#606266;font-weight:normal;">￥0.00</div>
<div class="t" style="left:2178.0px;width:400px;text-align:center;top:1549.0px;font-size:28px;line-height:40px;color:#606266;font-weight:normal;">支付成功</div>
<div class="t" style="left:2357.5px;width:400px;text-align:center;top:1549.0px;font-size:28px;line-height:40px;color:#606266;font-weight:normal;">未通知</div>
<div class="t" style="left:2557.5px;width:400px;text-align:center;top:1524.5px;font-size:28px;line-height:40px;color:#606266;font-weight:normal;letter-spacing:0.8px;">2021-10-27</div>
<div class="t" style="left:2557.5px;width:400px;text-align:center;top:1570.5px;font-size:28px;line-height:40px;color:#606266;font-weight:normal;letter-spacing:0.8px;">13:17:03</div>
<div class="t" style="left:2758.0px;width:400px;text-align:center;top:1524.5px;font-size:28px;line-height:40px;color:#606266;font-weight:normal;letter-spacing:0.8px;">2021-10-27</div>
<div class="t" style="left:2758.0px;width:400px;text-align:center;top:1570.5px;font-size:28px;line-height:40px;color:#606266;font-weight:normal;letter-spacing:0.8px;">13:17:08</div>
<svg class="b" style="left:3073px;top:1553px;" width="24" height="24" viewBox="0 0 24 24"><circle cx="11.3" cy="11" r="9.1" fill="none" stroke="#409eff" stroke-width="1.6"/><path d="M17.8 17.6 L21.6 21.6" stroke="#409eff" stroke-width="1.6"/></svg>
<div class="t " style="left:3107.5px;top:1547.5px;font-size:23.5px;line-height:36px;color:#409eff;font-weight:normal;">查看详情</div>
<div class="b" style="left:436px;top:1898px;width:2782px;height:2px;background:#dfe6ec;"></div>
<div class="b" style="left:436px;top:1758px;width:60px;height:50px;overflow:hidden;"><div class="t" style="left:-9px;top:12.5px;font-size:28px;line-height:40px;color:#606266;letter-spacing:0.5px;">17</div></div>
<div class="t " style="left:547px;top:1770.5px;font-size:28px;line-height:40px;color:#606266;font-weight:normal;letter-spacing:-0.3px;">微信 JSAPI 支付</div>
<div class="b" style="left:798px;top:1728px;width:72px;height:40px;background:#e8f4ff;border:2px solid #d1e9ff;border-radius:8px;"></div>
<div class="t " style="left:811px;top:1732.5px;font-size:22.5px;line-height:36px;color:#1890ff;font-weight:normal;">商户</div>
<div class="t " style="left:877px;top:1732.0px;font-size:24px;line-height:36px;color:#606266;font-weight:normal;letter-spacing:0.75px;">1635311468233</div>
<div class="b" style="left:798px;top:1807px;width:72px;height:39px;background:#fff8e6;border:2px solid #fff1cc;border-radius:8px;"></div>
<div class="t " style="left:811px;top:1810.5px;font-size:22.5px;line-height:36px;color:#ffba00;font-weight:normal;">支付</div>
<div class="t " style="left:877px;top:1810.0px;font-size:24px;line-height:36px;color:#606266;font-weight:normal;letter-spacing:1.05px;">4200001194202110276752100612</div>
<div class="t " style="left:1371px;top:1770.5px;font-size:28px;line-height:40px;color:#606266;font-weight:normal;letter-spacing:0.3px;">标题<span style="display:inline-block;width:27px;padding-left:4.5px;box-sizing:border-box;letter-spacing:0">:</span>1635311468233</div>
<div class="t" style="left:1598.0px;width:400px;text-align:center;top:1770.5px;font-size:28px;line-height:40px;color:#606266;font-weight:normal;">￥0.01</div>
<div class="t" style="left:1798.5px;width:400px;text-align:center;top:1770.5px;font-size:28px;line-height:40px;color:#606266;font-weight:normal;">￥0.00</div>
<div class="t" style="left:1998.5px;width:400px;text-align:center;top:1770.5px;font-size:28px;line-height:40px;color:#606266;font-weight:normal;">￥0.00</div>
<div class="t" style="left:2178.0px;width:400px;text-align:center;top:1771.0px;font-size:28px;line-height:40px;color:#606266;font-weight:normal;">支付成功</div>
<div class="t" style="left:2357.5px;width:400px;text-align:center;top:1771.0px;font-size:28px;line-height:40px;color:#606266;font-weight:normal;">未通知</div>
<div class="t" style="left:2557.5px;width:400px;text-align:center;top:1746.5px;font-size:28px;line-height:40px;color:#606266;font-weight:normal;letter-spacing:0.8px;">2021-10-27</div>
<div class="t" style="left:2557.5px;width:400px;text-align:center;top:1792.5px;font-size:28px;line-height:40px;color:#606266;font-weight:normal;letter-spacing:0.8px;">13:11:08</div>
<div class="t" style="left:2758.0px;width:400px;text-align:center;top:1746.5px;font-size:28px;line-height:40px;color:#606266;font-weight:normal;letter-spacing:0.8px;">2021-10-27</div>
<div class="t" style="left:2758.0px;width:400px;text-align:center;top:1792.5px;font-size:28px;line-height:40px;color:#606266;font-weight:normal;letter-spacing:0.8px;">13:11:15</div>
<svg class="b" style="left:3073px;top:1775px;" width="24" height="24" viewBox="0 0 24 24"><circle cx="11.3" cy="11" r="9.1" fill="none" stroke="#409eff" stroke-width="1.6"/><path d="M17.8 17.6 L21.6 21.6" stroke="#409eff" stroke-width="1.6"/></svg>
<div class="t " style="left:3107.5px;top:1769.5px;font-size:23.5px;line-height:36px;color:#409eff;font-weight:normal;">查看详情</div>
<div class="b" style="left:436px;top:1980px;width:60px;height:50px;overflow:hidden;"><div class="t" style="left:-9px;top:12.5px;font-size:28px;line-height:40px;color:#606266;letter-spacing:0.5px;">16</div></div>
<div class="t " style="left:547px;top:1992.5px;font-size:28px;line-height:40px;color:#606266;font-weight:normal;letter-spacing:-0.3px;">微信 JSAPI 支付</div>
<div class="b" style="left:798px;top:1950px;width:72px;height:40px;background:#e8f4ff;border:2px solid #d1e9ff;border-radius:8px;"></div>
<div class="t " style="left:811px;top:1954.5px;font-size:22.5px;line-height:36px;color:#1890ff;font-weight:normal;">商户</div>
<div class="t " style="left:877px;top:1954.0px;font-size:24px;line-height:36px;color:#606266;font-weight:normal;letter-spacing:0.75px;">1635311251736</div>
<div class="b" style="left:798px;top:2029px;width:72px;height:39px;background:#fff8e6;border:2px solid #fff1cc;border-radius:8px;"></div>
<div class="t " style="left:811px;top:2032.5px;font-size:22.5px;line-height:36px;color:#ffba00;font-weight:normal;">支付</div>
<div class="t " style="left:877px;top:2032.0px;font-size:24px;line-height:36px;color:#606266;font-weight:normal;letter-spacing:1.05px;">4200001170202110275512345678</div>
<div class="t " style="left:1371px;top:1992.5px;font-size:28px;line-height:40px;color:#606266;font-weight:normal;letter-spacing:0.3px;">标题<span style="display:inline-block;width:27px;padding-left:4.5px;box-sizing:border-box;letter-spacing:0">:</span>1635311251736</div>
<div class="t" style="left:1598.0px;width:400px;text-align:center;top:1992.5px;font-size:28px;line-height:40px;color:#606266;font-weight:normal;">￥0.01</div>
<div class="t" style="left:1798.5px;width:400px;text-align:center;top:1992.5px;font-size:28px;line-height:40px;color:#606266;font-weight:normal;">￥0.00</div>
<div class="t" style="left:1998.5px;width:400px;text-align:center;top:1992.5px;font-size:28px;line-height:40px;color:#606266;font-weight:normal;">￥0.00</div>
<div class="t" style="left:2178.0px;width:400px;text-align:center;top:1993.0px;font-size:28px;line-height:40px;color:#606266;font-weight:normal;">支付成功</div>
<div class="t" style="left:2357.5px;width:400px;text-align:center;top:1993.0px;font-size:28px;line-height:40px;color:#606266;font-weight:normal;">未通知</div>
<div class="t" style="left:2557.5px;width:400px;text-align:center;top:1968.5px;font-size:28px;line-height:40px;color:#606266;font-weight:normal;letter-spacing:0.8px;">2021-10-27</div>
<div class="t" style="left:2557.5px;width:400px;text-align:center;top:2014.5px;font-size:28px;line-height:40px;color:#606266;font-weight:normal;letter-spacing:0.8px;">13:07:40</div>
<div class="t" style="left:2758.0px;width:400px;text-align:center;top:1968.5px;font-size:28px;line-height:40px;color:#606266;font-weight:normal;letter-spacing:0.8px;">2021-10-27</div>
<div class="t" style="left:2758.0px;width:400px;text-align:center;top:2014.5px;font-size:28px;line-height:40px;color:#606266;font-weight:normal;letter-spacing:0.8px;">13:07:48</div>
<svg class="b" style="left:3073px;top:1997px;" width="24" height="24" viewBox="0 0 24 24"><circle cx="11.3" cy="11" r="9.1" fill="none" stroke="#409eff" stroke-width="1.6"/><path d="M17.8 17.6 L21.6 21.6" stroke="#409eff" stroke-width="1.6"/></svg>
<div class="t " style="left:3107.5px;top:1991.5px;font-size:23.5px;line-height:36px;color:#409eff;font-weight:normal;">查看详情</div>
<div class="b" style="left:3180px;top:74px;width:72px;height:1894px;background:linear-gradient(to right, rgba(30,40,60,0), rgba(30,40,60,0.05) 70%, rgba(30,40,60,0.08));"></div>
</body></html>
